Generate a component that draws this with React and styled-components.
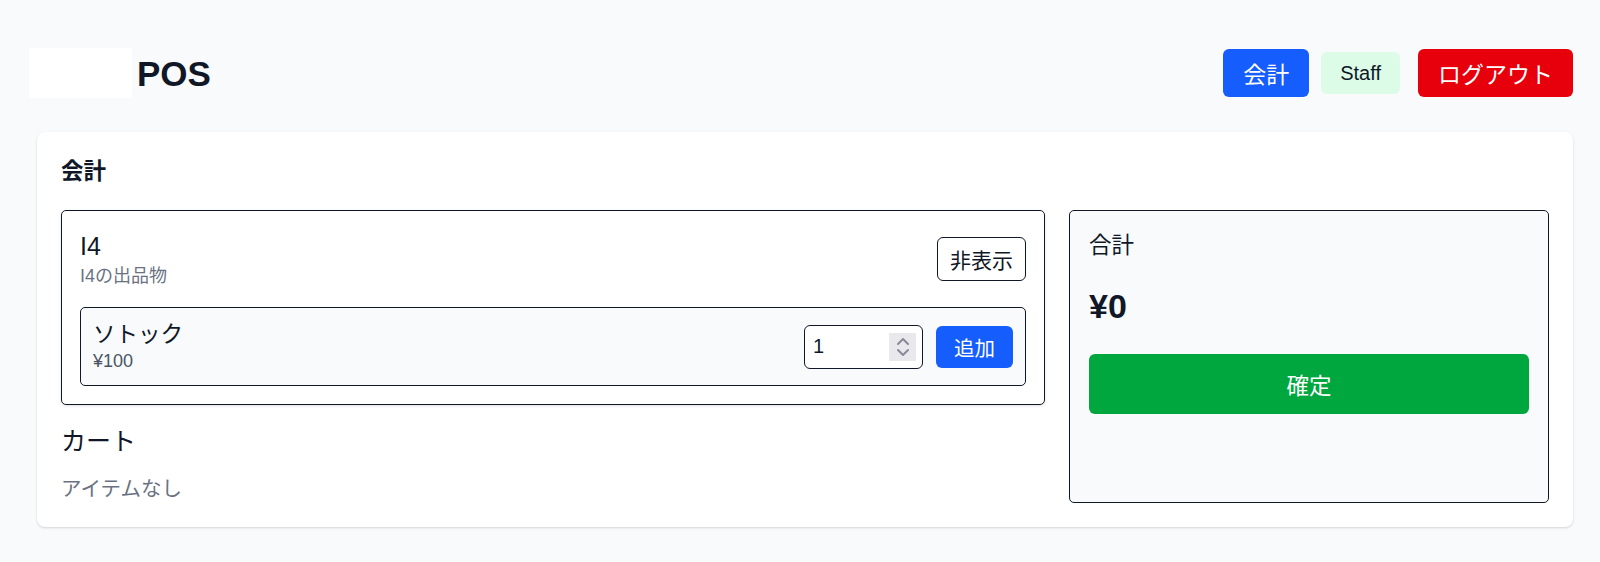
import styled, { createGlobalStyle } from 'styled-components'

const GlobalStyle = createGlobalStyle`
    html, body {
        margin: 0;
        padding: 0;
        background-color: #f9fafb;
        color: #101828;
        font-family: "Liberation Sans", "Noto Sans CJK JP", sans-serif;
    }
    * {
        box-sizing: border-box;
    }
`

const StyledPage = styled.div`
    min-height: 562px;
    padding: 48px 27px 0 29px;
`

const StyledHeader = styled.header`
    display: flex;
    align-items: center;
    justify-content: space-between;
    height: 50px;
`

const StyledBrand = styled.div`
    display: flex;
    align-items: center;
    gap: 5px;
`

const StyledLogo = styled.div`
    width: 103px;
    height: 50px;
    background-color: #ffffff;
`

const StyledBrandName = styled.h1`
    margin: 0;
    font-size: 35px;
    font-weight: 700;
    line-height: 1;
`

const StyledNav = styled.nav`
    display: flex;
    align-items: center;
`

const StyledNavButton = styled.button`
    height: 48px;
    padding: 0 20px;
    border: none;
    border-radius: 6px;
    font-family: inherit;
    font-size: 23px;
    color: #ffffff;
    background-color: ${p => p.$danger ? '#e7000b' : '#155dfc'};
    cursor: pointer;
`

const StyledRole = styled.span`
    display: flex;
    align-items: center;
    height: 42px;
    padding: 0 19px;
    margin: 0 18px 0 12px;
    border-radius: 6px;
    background-color: #dcfce7;
    font-size: 20px;
    color: #101828;
`

const StyledCard = styled.main`
    margin: 34px 0 0 8px;
    padding: 24px;
    background-color: #ffffff;
    border-radius: 8px;
    box-shadow: 0 1px 3px rgba(0, 0, 0, 0.1), 0 1px 2px rgba(0, 0, 0, 0.06);
`

const StyledCardTitle = styled.h2`
    margin: 0 0 22px 0;
    font-size: 22.5px;
    line-height: 32px;
    font-weight: 700;
`

const StyledGrid = styled.div`
    display: grid;
    grid-template-columns: repeat(3, 1fr);
    gap: 24px;
`

const StyledLeft = styled.div`
    grid-column: span 2;
`

const StyledShop = styled.section`
    padding: 18px;
    border: 1px solid #101828;
    border-radius: 5px;
    box-shadow: 0 1px 3px rgba(0, 0, 0, 0.12);
`

const StyledShopHead = styled.div`
    display: flex;
    align-items: center;
    justify-content: space-between;
`

const StyledShopName = styled.div`
    font-size: 25px;
    line-height: 35px;
`

const StyledShopSub = styled.div`
    font-size: 18px;
    line-height: 25px;
    color: #6a7282;
`

const StyledOutlineButton = styled.button`
    height: 44px;
    padding: 0 12px;
    border: 1px solid #101828;
    border-radius: 6px;
    background-color: #ffffff;
    font-family: inherit;
    font-size: 21px;
    color: #101828;
    cursor: pointer;
`

const StyledItem = styled.div`
    display: flex;
    align-items: center;
    justify-content: space-between;
    margin-top: 18px;
    padding: 12px;
    border: 1px solid #101828;
    border-radius: 5px;
    background-color: #f9fafb;
`

const StyledItemName = styled.div`
    font-size: 22.5px;
    line-height: 30px;
`

const StyledItemPrice = styled.div`
    font-size: 18px;
    line-height: 23px;
    color: #4a5565;
`

const StyledControls = styled.div`
    display: flex;
    align-items: center;
    gap: 13px;
`

const StyledQty = styled.div`
    display: flex;
    align-items: center;
    width: 119px;
    height: 44px;
    padding: 0 6px 0 8px;
    border: 1px solid #101828;
    border-radius: 6px;
    background-color: #ffffff;
`

const StyledQtyInput = styled.input`
    flex: 1;
    min-width: 0;
    border: none;
    outline: none;
    padding: 0;
    background: transparent;
    font-family: inherit;
    font-size: 20px;
    color: #101828;
    appearance: textfield;

    &::-webkit-inner-spin-button,
    &::-webkit-outer-spin-button {
        -webkit-appearance: none;
        margin: 0;
    }
`

const StyledSpinner = styled.span`
    display: flex;
    align-items: center;
    justify-content: center;
    width: 27px;
    height: 28px;
    background-color: #e8e8ed;
`

const StyledPrimaryButton = styled.button`
    height: 42px;
    padding: 0 18px;
    border: none;
    border-radius: 6px;
    background-color: #155dfc;
    font-family: inherit;
    font-size: 20.5px;
    color: #ffffff;
    cursor: pointer;
`

const StyledCartTitle = styled.h3`
    margin: 19px 0 0 0;
    font-size: 25px;
    line-height: 35px;
    font-weight: 400;
`

const StyledEmpty = styled.p`
    margin: 15px 0 0 0;
    font-size: 20.5px;
    line-height: 29px;
    color: #6a7282;
`

const StyledSummary = styled.aside`
    padding: 19px;
    border: 1px solid #101828;
    border-radius: 5px;
    background-color: #f9fafb;
`

const StyledSummaryLabel = styled.div`
    font-size: 22.5px;
    line-height: 31px;
`

const StyledTotal = styled.div`
    margin-top: 24px;
    font-size: 34px;
    line-height: 42px;
    font-weight: 700;
`

const StyledConfirm = styled.button`
    display: block;
    width: 100%;
    height: 60px;
    margin-top: 27px;
    border: none;
    border-radius: 6px;
    background-color: #00a63e;
    font-family: inherit;
    font-size: 22.5px;
    color: #ffffff;
    cursor: pointer;
`

function SpinIcon() {
    return (
        <svg width="14" height="24" viewBox="0 0 14 24" fill="none" stroke="#8a8a98" strokeWidth="2" strokeLinecap="round" strokeLinejoin="round">
            <path d="M2 9 L7 4 L12 9" />
            <path d="M2 15 L7 20 L12 15" />
        </svg>
    )
}

export default function App() {
    return (
        <>
            <GlobalStyle />
            <StyledPage>
                <StyledHeader>
                    <StyledBrand>
                        <StyledLogo />
                        <StyledBrandName>POS</StyledBrandName>
                    </StyledBrand>
                    <StyledNav>
                        <StyledNavButton>会計</StyledNavButton>
                        <StyledRole>Staff</StyledRole>
                        <StyledNavButton $danger>ログアウト</StyledNavButton>
                    </StyledNav>
                </StyledHeader>

                <StyledCard>
                    <StyledCardTitle>会計</StyledCardTitle>
                    <StyledGrid>
                        <StyledLeft>
                            <StyledShop>
                                <StyledShopHead>
                                    <div>
                                        <StyledShopName>I4</StyledShopName>
                                        <StyledShopSub>I4の出品物</StyledShopSub>
                                    </div>
                                    <StyledOutlineButton>非表示</StyledOutlineButton>
                                </StyledShopHead>
                                <StyledItem>
                                    <div>
                                        <StyledItemName>ソトック</StyledItemName>
                                        <StyledItemPrice>¥100</StyledItemPrice>
                                    </div>
                                    <StyledControls>
                                        <StyledQty>
                                            <StyledQtyInput type="number" defaultValue={1} min={1} />
                                            <StyledSpinner>
                                                <SpinIcon />
                                            </StyledSpinner>
                                        </StyledQty>
                                        <StyledPrimaryButton>追加</StyledPrimaryButton>
                                    </StyledControls>
                                </StyledItem>
                            </StyledShop>
                            <StyledCartTitle>カート</StyledCartTitle>
                            <StyledEmpty>アイテムなし</StyledEmpty>
                        </StyledLeft>

                        <StyledSummary>
                            <StyledSummaryLabel>合計</StyledSummaryLabel>
                            <StyledTotal>¥0</StyledTotal>
                            <StyledConfirm>確定</StyledConfirm>
                        </StyledSummary>
                    </StyledGrid>
                </StyledCard>
            </StyledPage>
        </>
    )
}
